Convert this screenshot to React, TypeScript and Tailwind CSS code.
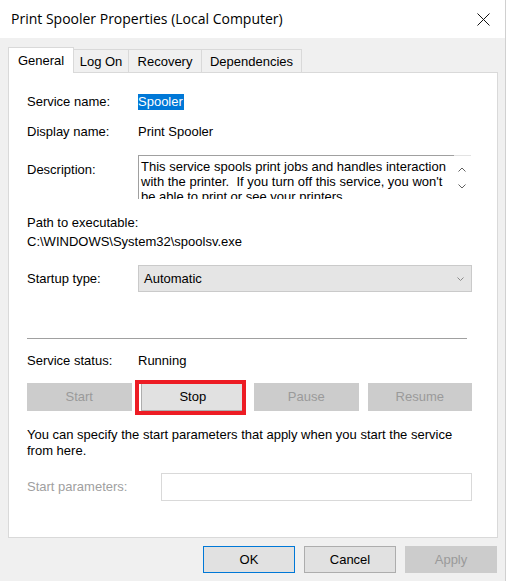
export default function App() {
  const disabledBtn =
    "h-[28px] bg-[#cccccc] border border-[#cccccc] text-[#9a9a9a] flex items-center justify-center";
  return (
    <div className="w-[507px] h-[581px] flex bg-white font-['Liberation_Sans',Arial,sans-serif] text-[13px] leading-[16px] text-black overflow-hidden">
      <div className="w-[505px] h-full flex flex-col">
        {/* title bar */}
        <div className="h-[38px] shrink-0 bg-white flex items-center justify-between pl-[11px] pr-[15px]">
          <span className="font-['Open_Sans',sans-serif] text-[14px] text-black">
            Print Spooler Properties (Local Computer)
          </span>
          <svg width="13" height="13" viewBox="0 0 13 13">
            <path d="M0.5 0.5 L12.5 12.5 M12.5 0.5 L0.5 12.5" stroke="#111" strokeWidth="1" />
          </svg>
        </div>

        <div className="flex-1 bg-[#f0f0f0] flex flex-col pl-[8px] pt-[9px]">
          {/* tabs */}
          <div className="flex items-end h-[25px]">
            <div className="relative z-10 w-[66px] h-[26px] -mb-[1px] bg-white border border-b-0 border-[#d9d9d9] flex items-center justify-center">
              General
            </div>
            <div className="w-[55px] h-[23px] border-t border-r border-[#d9d9d9] flex items-center justify-center pt-[1px]">
              Log On
            </div>
            <div className="w-[73px] h-[23px] border-t border-r border-[#d9d9d9] flex items-center justify-center pt-[1px]">
              Recovery
            </div>
            <div className="w-[100px] h-[23px] border-t border-r border-[#d9d9d9] flex items-center justify-center pt-[1px]">
              Dependencies
            </div>
          </div>

          {/* panel */}
          <div className="w-[490px] h-[466px] bg-white border border-[#d9d9d9] pl-[18px] pr-[25px] pt-[21px] flex flex-col">
            <div className="flex items-center h-[16px]">
              <span className="w-[111px]">Service name:</span>
              <span className="bg-[#0078d7] text-white pr-[1px]">Spooler</span>
            </div>
            <div className="flex items-center h-[16px] mt-[14px]">
              <span className="w-[111px]">Display name:</span>
              <span>Print Spooler</span>
            </div>
            <div className="flex mt-[15px]">
              <span className="w-[111px] pt-[7px]">Description:</span>
              <div className="w-[333px] h-[44px] flex bg-white">
                <div className="flex-1 border-t border-l border-[#a0a0a0] pl-[2px] pt-[3px] leading-[15px] overflow-hidden whitespace-pre">
                  <div>This service spools print jobs and handles interaction</div>
                  <div>with the printer.  If you turn off this service, you won't</div>
                  <div>be able to print or see your printers.</div>
                </div>
                <div className="w-[17px] border-t border-[#e3e3e3] flex flex-col items-center pt-[11px] gap-[12px] pr-[2px]">
                  <svg width="8" height="5" viewBox="0 0 8 5">
                    <path d="M0.5 4.5 L4 1 L7.5 4.5" stroke="#606060" fill="none" strokeWidth="1" />
                  </svg>
                  <svg width="8" height="5" viewBox="0 0 8 5">
                    <path d="M0.5 0.5 L4 4 L7.5 0.5" stroke="#606060" fill="none" strokeWidth="1" />
                  </svg>
                </div>
              </div>
            </div>
            <div className="mt-[16px]">Path to executable:</div>
            <div className="mt-[3px]">C:\WINDOWS\System32\spoolsv.exe</div>
            <div className="flex items-center mt-[15px]">
              <span className="w-[111px]">Startup type:</span>
              <div className="w-[334px] h-[27px] bg-[#e5e5e5] border border-[#cacaca] flex items-center justify-between pl-[5px] pr-[7px]">
                <span>Automatic</span>
                <svg width="7" height="4" viewBox="0 0 7 4">
                  <path d="M0.5 0.5 L3.5 3.5 L6.5 0.5" stroke="#8a8a8a" fill="none" strokeWidth="1" />
                </svg>
              </div>
            </div>
            <div className="mt-[46px] h-px w-[440px] bg-[#a0a0a0]" />
            <div className="flex items-center h-[16px] mt-[14px]">
              <span className="w-[111px]">Service status:</span>
              <span>Running</span>
            </div>
            <div className="grid grid-cols-4 gap-[9px] mt-[14px]">
              <div className={disabledBtn}>Start</div>
              <div className="relative">
                <div className="h-[28px] bg-[#e1e1e1] border border-[#adadad] flex items-center justify-center">
                  Stop
                </div>
                <div className="absolute -left-[6px] -right-[1px] -top-[3px] -bottom-[4px] border-[4px] border-[#ed1c24]" />
              </div>
              <div className={disabledBtn}>Pause</div>
              <div className={disabledBtn}>Resume</div>
            </div>
            <div className="mt-[16px]">
              You can specify the start parameters that apply when you start the service
              <br />
              from here.
            </div>
            <div className="flex items-center mt-[14px]">
              <span className="w-[134px] text-[#a0a0a0]">Start parameters:</span>
              <div className="w-[311px] h-[28px] bg-white border border-[#d9d9d9]" />
            </div>
          </div>

          {/* bottom buttons */}
          <div className="flex justify-end gap-[9px] pr-[8px] mt-[8px]">
            <div className="w-[92px] h-[27px] bg-[#e1e1e1] border border-[#0078d7] flex items-center justify-center">
              OK
            </div>
            <div className="w-[92px] h-[27px] bg-[#e1e1e1] border border-[#adadad] flex items-center justify-center">
              Cancel
            </div>
            <div className="w-[92px] h-[27px] bg-[#cccccc] border border-[#cccccc] text-[#9a9a9a] flex items-center justify-center">
              Apply
            </div>
          </div>
        </div>
      </div>
      <div className="w-[1px] h-full bg-[#d0d0d0]" />
    </div>
  );
}
